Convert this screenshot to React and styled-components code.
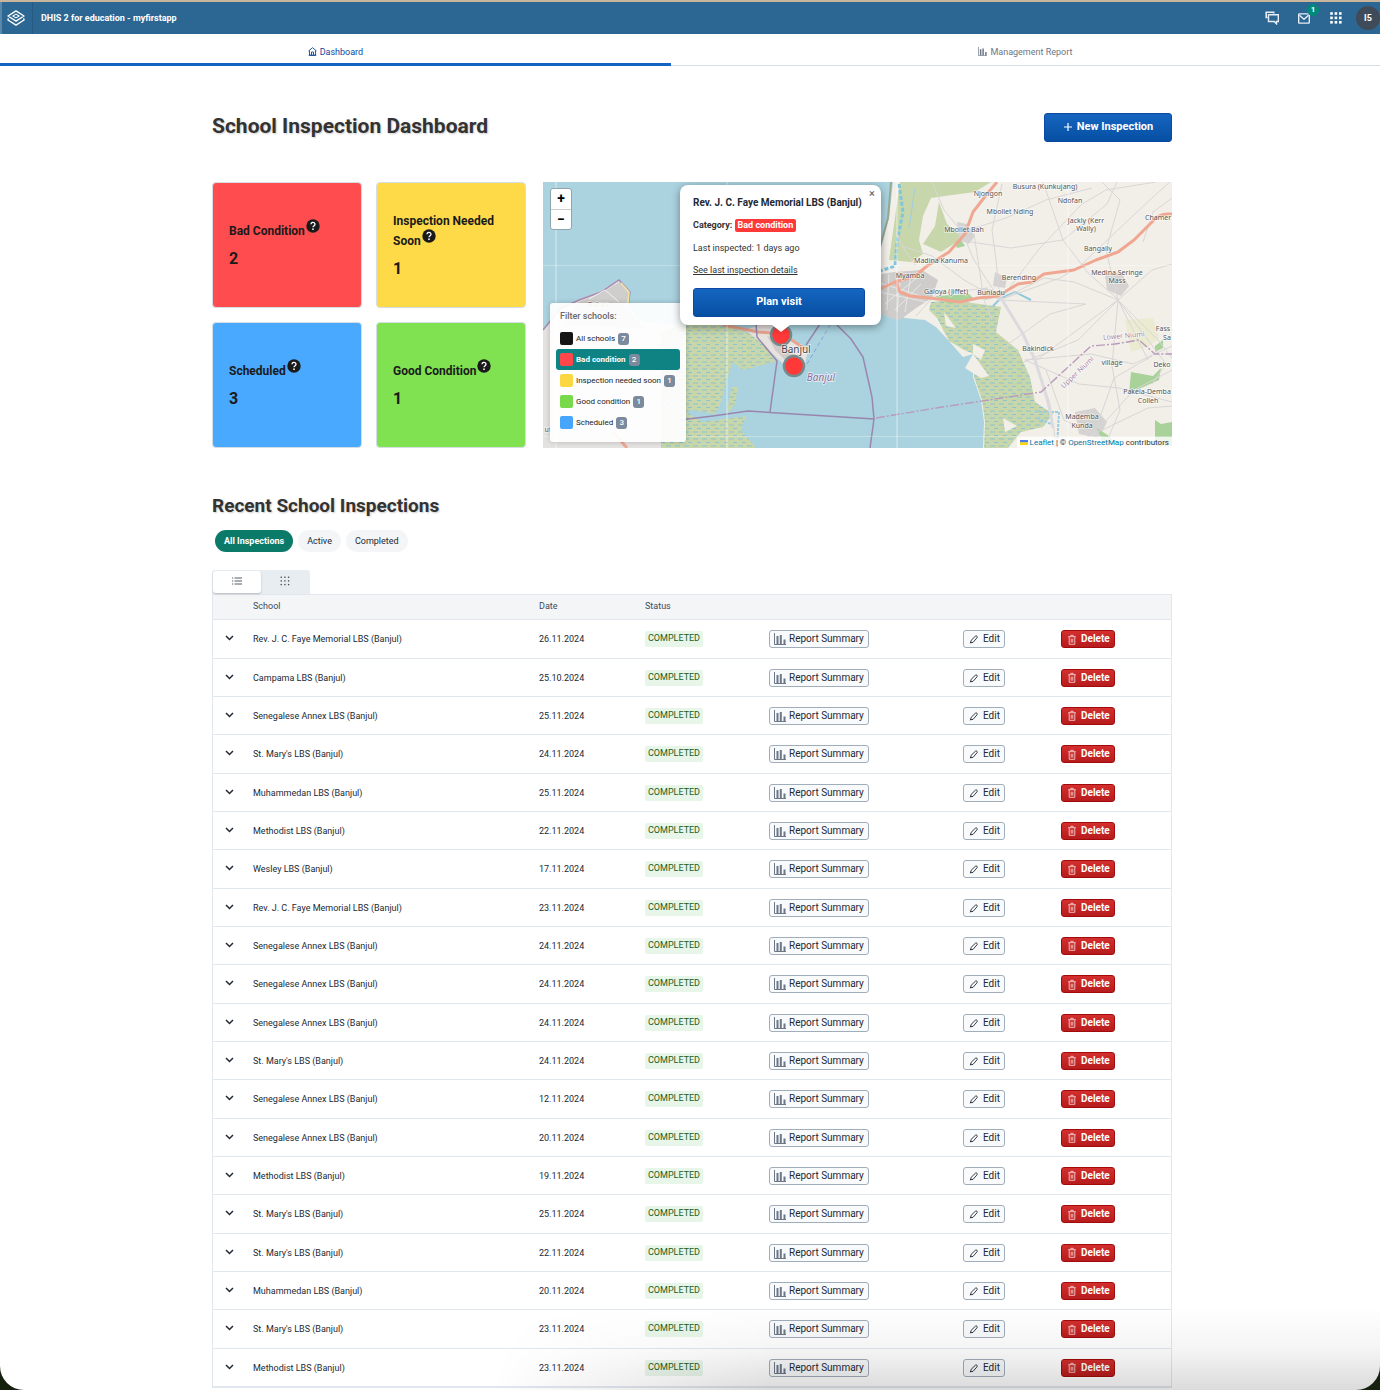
import React, { useState } from "react";
import styled, { createGlobalStyle, css } from "styled-components";

const GlobalStyle = createGlobalStyle`
  *, *::before, *::after { box-sizing: border-box; }
  body {
    margin: 0;
    background: #16210d;
    color: #212934;
    font-family: Roboto, "Liberation Sans", sans-serif;
    font-size: 9px;
    line-height: 12px;
  }
  button { font: inherit; color: inherit; cursor: pointer; margin: 0; }
  h1, h2, h3, p { margin: 0; }
  svg { display: block; flex: none; }
`;

const Window = styled.div`
  position: relative;
  min-height: 100vh;
  overflow: hidden;
  background: #fff;
  border-top: 2px solid #c9b59c;
  border-radius: 0 0 24px 24px;
`;

const WindowShade = styled.div`
  position: absolute;
  right: 0;
  bottom: 0;
  width: 66%;
  height: 84px;
  pointer-events: none;
  background: linear-gradient(to bottom, rgba(0, 0, 0, 0), rgba(0, 0, 0, 0.04) 50%, rgba(0, 0, 0, 0.14));
  mask-image: linear-gradient(100deg, transparent 4%, #000 34%);
`;

/* ---------- header bar ---------- */

const HeaderBar = styled.header`
  display: flex;
  align-items: center;
  height: 32px;
  background: #2c6693;
  border-left: 2px solid #5b87a9;
  color: #fff;
`;

const LogoLink = styled.a`
  display: flex;
  align-items: center;
  width: 31px;
  height: 32px;
  padding-left: 5px;
  border-right: 1px solid #275a82;
`;

const AppTitle = styled.span`
  margin-left: 8px;
  font-weight: 700;
`;

const HeaderTools = styled.nav`
  display: flex;
  align-items: center;
  margin-left: auto;
`;

const ToolButton = styled.button`
  position: relative;
  display: flex;
  align-items: center;
  justify-content: center;
  width: 32px;
  height: 32px;
  padding: 0;
  border: 0;
  background: none;
`;

const UnreadBadge = styled.span`
  position: absolute;
  top: 2px;
  right: 1px;
  width: 12px;
  height: 12px;
  border-radius: 50%;
  background: #00897b;
  font-size: 8px;
  font-weight: 700;
  line-height: 12px;
`;

const Avatar = styled.button`
  width: 24px;
  height: 24px;
  margin-left: 4px;
  padding: 0;
  border: 0;
  border-radius: 50%;
  background: #404b5a;
  font-weight: 700;
`;

/* ---------- tabs ---------- */

const TabBar = styled.nav`
  display: flex;
  height: 32px;
  border-bottom: 1px solid #d5dde5;
`;

const Tab = styled.button`
  display: flex;
  flex: 1 1 auto;
  align-items: center;
  justify-content: center;
  gap: 3px;
  height: 32px;
  padding: 6px 0 0;
  border: 0;
  border-bottom: 3px solid ${(p) => (p.$active ? "#1565c0" : "transparent")};
  background: none;
  color: ${(p) => (p.$active ? "#0d47a1" : "#6c7787")};
`;

/* ---------- page ---------- */

const PageArea = styled.div`
  padding: 47px 0 2px 4px;
`;

const Page = styled.main`
  width: 960px;
  max-width: calc(100% - 32px);
  margin: 0 auto;
`;

const TitleRow = styled.div`
  display: flex;
  align-items: flex-start;
  justify-content: space-between;
`;

const PageTitle = styled.h1`
  color: #333;
  font-size: 21px;
  font-weight: 700;
  line-height: 27px;
  text-shadow: 1px 1px 2px rgba(0, 0, 0, 0.2);
`;

const SectionTitle = styled.h2`
  margin-top: 44px;
  color: #333;
  font-size: 19px;
  font-weight: 700;
  line-height: 28px;
  text-shadow: 1px 1px 2px rgba(0, 0, 0, 0.2);
`;

const PrimaryButton = styled.button`
  display: flex;
  align-items: center;
  justify-content: center;
  gap: 4px;
  width: ${(p) => (p.$wide ? "100%" : "128px")};
  height: 29px;
  padding: 0 0 2px;
  border: 1px solid #0d47a1;
  border-radius: 3px;
  background: linear-gradient(180deg, #1565c0, #0650a3);
  color: #fff;
  font-size: 11px;
  font-weight: 700;
`;

const Overview = styled.section`
  display: grid;
  grid-template-columns: 314px 1fr;
  gap: 17px;
  height: 266px;
  margin-top: 40px;
`;

const CardGrid = styled.div`
  display: grid;
  grid-template-columns: 1fr 1fr;
  grid-auto-rows: 1fr;
  gap: 14px;
`;

const Card = styled.article`
  display: flex;
  flex-direction: column;
  justify-content: center;
  gap: 8px;
  padding: 0 16px;
  border: 1px solid #d5dde5;
  border-radius: 4px;
  background: ${(p) => p.$color};
  color: #1a1a1a;
`;

const CardTitle = styled.h3`
  font-size: 12px;
  font-weight: 700;
  line-height: 20px;

  svg {
    display: inline-block;
    margin: -6px 0 0 1px;
    vertical-align: 0;
  }
`;

const CardCount = styled.p`
  font-size: 16px;
  font-weight: 700;
  line-height: 20px;
`;

/* ---------- map ---------- */

const MapFrame = styled.div`
  position: relative;
  overflow: hidden;
  background: #aad3df;

  > svg { width: 100%; height: 100%; }
`;

const ZoomControl = styled.div`
  position: absolute;
  top: 6px;
  left: 7px;
  display: flex;
  flex-direction: column;
  border: 1px solid #8fa5ad;
  border-radius: 3px;
  background: #fff;
`;

const ZoomButton = styled.button`
  width: 20px;
  height: 20px;
  padding: 0 0 2px;
  border: 0;
  background: none;
  color: #000;
  font-size: 14px;
  font-weight: 700;
  line-height: 18px;

  & + & { border-top: 1px solid #ccc; }
`;

const Popup = styled.div`
  position: absolute;
  top: 3px;
  left: 137px;
  width: 201px;
  height: 140px;
  padding: 11px 16px 0 13px;
  border-radius: 8px;
  background: #fff;
  box-shadow: 0 2px 9px rgba(0, 0, 0, 0.4);
  color: #333;

  &::after {
    content: "";
    position: absolute;
    top: 100%;
    left: 92px;
    border: solid transparent;
    border-width: 7px 9px 0;
    border-top-color: #fff;
  }
`;

const PopupTitle = styled.h3`
  font-size: 10px;
  font-weight: 700;
  line-height: 13px;
  color: #212934;
  white-space: nowrap;
`;

const PopupLine = styled.p`
  margin-top: 9px;
  line-height: 14px;
`;

const PopupLink = styled.a`
  display: block;
  margin: 8px 0 11px;
  color: #333;
  line-height: 14px;
`;

const Category = styled.strong`
  font-weight: 700;
`;

const CategoryTag = styled.span`
  display: inline-block;
  padding: 0 3px;
  border-radius: 2px;
  background: #ff3838;
  color: #fff;
  font-weight: 700;
  line-height: 13px;
`;

const PopupClose = styled.button`
  position: absolute;
  top: 3px;
  right: 3px;
  width: 12px;
  height: 12px;
  padding: 0;
  border: 0;
  background: none;
  color: #555;
  font-size: 11px;
`;

const FilterPanel = styled.div`
  position: absolute;
  left: 7px;
  bottom: 6px;
  display: flex;
  flex-direction: column;
  width: 136px;
  height: 139px;
  padding: 7px 6px 0;
  border-radius: 3px;
  background: rgba(255, 255, 255, 0.92);
  box-shadow: 0 0 5px rgba(0, 0, 0, 0.2);
  color: #1a1a1a;
`;

const FilterTitle = styled.h3`
  margin: 0 4px 6px;
  color: #6a6a6a;
  font-size: 9px;
  font-weight: 500;
`;

const FilterOption = styled.button`
  display: flex;
  align-items: center;
  gap: 3px;
  height: 21px;
  padding: 0 4px;
  border: 0;
  border-radius: 3px;
  background: ${(p) => (p.$active ? "#0f8383" : "none")};
  color: ${(p) => (p.$active ? "#fff" : "inherit")};
  font-size: 8px;
  font-weight: ${(p) => (p.$active ? 700 : 400)};
  white-space: nowrap;
`;

const Swatch = styled.span`
  flex: none;
  width: 13px;
  height: 13px;
  border-radius: 2px;
  background: ${(p) => p.$color};
`;

const CountTag = styled.span`
  flex: none;
  width: 11px;
  height: 12px;
  border-radius: 3px;
  background: #7b8a9c;
  color: #fff;
  font-size: 8px;
  font-weight: 500;
  line-height: 12px;
`;

const Attribution = styled.p`
  position: absolute;
  right: 0;
  bottom: 0;
  display: flex;
  align-items: center;
  gap: 2px;
  padding: 0 3px;
  background: rgba(255, 255, 255, 0.8);
  color: #333;
  font-size: 8px;
  line-height: 11px;

  a { color: #0078a8; text-decoration: none; }
`;

/* ---------- inspections ---------- */

const ChipRow = styled.div`
  display: flex;
  gap: 5px;
  margin: 10px 3px 18px;
`;

const Chip = styled.button`
  height: 22px;
  padding: 0 9px;
  border: 0;
  border-radius: 11px;
  background: ${(p) => (p.$active ? "#0b7a69" : "#f3f5f7")};
  color: ${(p) => (p.$active ? "#fff" : "#212934")};
  font-weight: ${(p) => (p.$active ? 700 : 400)};
`;

const ViewToggle = styled.div`
  display: inline-flex;
  height: 24px;
  padding: 1px;
  border-radius: 3px 3px 0 0;
  background: #e8edf2;
  vertical-align: top;
`;

const ViewButton = styled.button`
  display: flex;
  align-items: center;
  justify-content: center;
  width: 48px;
  height: 22px;
  padding: 0 0 2px;
  border: 0;
  border-radius: 3px;
  ${(p) =>
    p.$active
      ? css`background: #fff; box-shadow: 0 1px 2px rgba(33, 41, 52, 0.25);`
      : css`background: none;`}
`;

const Table = styled.table`
  width: 100%;
  border: 1px solid #e1e7ee;
  border-spacing: 0;
  table-layout: fixed;
`;

const HeadCell = styled.th`
  width: ${(p) => p.$width || "auto"};
  height: 25px;
  padding: 0 0 2px;
  border-bottom: 1px solid #e1e7ee;
  background: #f3f5f7;
  color: #404b5a;
  font-weight: 400;
  text-align: left;
`;

const Row = styled.tr`
  height: 38px;

  &:nth-child(3n + 1) { height: 39px; }
`;

const Cell = styled.td`
  padding: 0;
  border-bottom: 1px solid #e1e7ee;
  vertical-align: middle;
`;

const ExpandButton = styled.button`
  display: flex;
  align-items: center;
  justify-content: center;
  width: 32px;
  height: 20px;
  padding: 0 0 2px;
  border: 0;
  background: none;
`;

const StatusTag = styled.span`
  display: inline-block;
  height: 16px;
  padding: 0 3px;
  border-radius: 2px;
  background: #e8f5e9;
  color: #1b5e20;
  line-height: 15px;
  vertical-align: middle;
`;

const RowButton = styled.button`
  display: flex;
  align-items: center;
  gap: 3px;
  height: 18px;
  padding: 0 4px;
  border: 1px solid #a0adba;
  border-radius: 3px;
  background: #f9fafb;
  font-size: 10px;

  ${(p) =>
    p.$danger &&
    css`
      border-color: #a10b0b;
      background: linear-gradient(180deg, #d32f2f, #b71c1c);
      color: #fff;
      font-weight: 700;
    `}
`;

/* ---------- icons ---------- */

const LogoIcon = () => (
  <svg width="18" height="16" viewBox="0 0 18 16" fill="none" stroke="#fff" strokeWidth="1.4" strokeLinejoin="round">
    <path d="M9 .9 17 6 9 11.1 1 6z" />
    <path d="M9 4.1 12.2 6 9 7.9 5.8 6z" strokeWidth="1.1" />
    <path d="M1.3 8.3 1 10l8 5.1L17 10l-.3-1.7" />
  </svg>
);

const ChatIcon = () => (
  <svg width="14" height="14" viewBox="0 0 14 14" fill="none" stroke="#e6eef5" strokeWidth="1.4">
    <path d="M3.5 3.700h9.800v6.800h-1.800v2.300L9.200 10.500H3.500z" />
    <path d="M.5 1.200h8.200v1.300M1.200.8v5.700h1.500" strokeWidth="1.600" />
  </svg>
);

const MailIcon = () => (
  <svg width="12" height="11" viewBox="0 0 12 11" fill="none" stroke="#e6eef5" strokeWidth="1.4">
    <rect x=".7" y=".9" width="10.6" height="9.2" rx=".6" />
    <path d="m1.5 2.2 4.5 4 4.5-4" />
  </svg>
);

const DotGrid = ({ size, dot, color }) => (
  <svg width={size} height={size} viewBox="0 0 12 12" fill={color}>
    {[0, 1, 2].map((r) =>
      [0, 1, 2].map((c) => (
        <rect key={`${r}${c}`} x={c * 4.4 + (3 - dot) / 2} y={r * 4.4 + (3 - dot) / 2} width={dot} height={dot} />
      ))
    )}
  </svg>
);

const HomeIcon = () => (
  <svg width="9" height="9" viewBox="0 0 9 9" fill="none" stroke="#0d47a1" strokeWidth=".9">
    <path d="M.5 4 4.5.7 8.5 4M1.500 3.500v4.700h6V3.500M.7 8.300h7.600M3.500 8V5h2v3" />
  </svg>
);

const BarsIcon = ({ size }) => (
  <svg width={size} height={size} viewBox="0 0 12 12">
    <path d="M.5 0v11.5H12" fill="none" stroke="#6c7787" />
    <path d="M2.5 3h2v8h-2zM5.800 2h2v9h-2zM9.500 6.500h2V11h-2z" fill="#6c7787" />
  </svg>
);

const PlusIcon = () => (
  <svg width="10" height="10" viewBox="0 0 10 10" stroke="#fff" strokeWidth="1.2">
    <path d="M5 1v8M1 5h8" />
  </svg>
);

const HelpIcon = () => (
  <svg width="14" height="16" viewBox="0 0 14 16" role="img" aria-label="Help">
    <circle cx="7" cy="7" r="6.7" fill="#1a1a1a" />
    <path d="M5 5.300a2 1.800 0 1 1 3 1.500c-.7.4-1 .7-1 1.500" fill="none" stroke="#fff" strokeWidth="1.3" />
    <circle cx="7" cy="10.2" r=".85" fill="#fff" />
  </svg>
);

const ListIcon = () => (
  <svg width="10" height="8" viewBox="0 0 10 8" stroke="#404b5a">
    <path d="M0 1h1.200M0 4h1.200M0 7h1.200M2.500 1H10M2.500 4H10M2.500 7H10" strokeWidth=".9" />
  </svg>
);

const ChevronIcon = () => (
  <svg width="9" height="6" viewBox="0 0 9 6" fill="none" stroke="#212934" strokeWidth="1.5">
    <path d="M1 1l3.500 3.500L8 1" />
  </svg>
);

const PencilIcon = () => (
  <svg width="12" height="10" viewBox="-1 0 12 10" fill="none" stroke="#212934" strokeWidth=".9" strokeLinejoin="round">
    <path d="M6.400 2.200q1-.6 1.600.1t0 1.500L4 8.400l-2.500.4.6-2.400zM1.100 9.200l1.200-1.300" />
  </svg>
);

const TrashIcon = () => (
  <svg width="12" height="11" viewBox="-1 0 12 11" fill="none" stroke="#f6cccc" strokeWidth=".9">
    <path d="M1.200 2.700h7.600M3.800 2.500V1.300h2.400v1.200M2.200 2.900v7.400h5.600V2.900M4.200 4.700v4M5.800 4.700v4" />
  </svg>
);

const FlagIcon = () => (
  <svg width="8" height="5" viewBox="0 0 8 5">
    <path fill="#4c7be1" d="M0 0h8v2.500H0z" />
    <path fill="#ffd500" d="M0 2.500h8V5H0z" />
  </svg>
);

/* ---------- map drawing ---------- */

const minorRoads = [
  "M389 0l12 28 18 22 12 28 26 40 60-22 20-12 40-38 32-30 20-18",
  "M457 118l-4-40-4-30 10-46M457 118l-36-20-32-24-30-10",
  "M457 118l40-52 42-44 24-14 50-8",
  "M419 50l44-14 40-18 46-12M431 52l10 66 8 20",
  "M543 122l-36 10-50 36M543 122l-88-4",
  "M575 118l-44-18-30-4-44 22M575 118l-12-50 14-50-18-18",
  "M575 118l34-30 20-6M575 118l40 40 14 18M575 118l48 64-14 20M575 118l30 60M575 118l-6 66 8 44-16 38",
  "M575 118l-40 40-54 22M575 118l-84 62",
  "M482 178l66-6 42 10 39-18M482 178l54 24 40 4 53 14",
  "M493 180l10 36 8 32 2 18M551 252l-30-14-18-50",
  "M551 252l40-44 38-20M551 252l20-56 38-22M551 252l54-26 24-2M551 252l-30 14M551 252l40 14",
  "M520 58l26 34 30 26M520 58l-20-58M520 58l44-36 10-22M520 58l-52 8-40-6",
  "M373 134l20-22 52-6M373 84l-14-20-6-14M600 60l10-30 19-14",
];

const townStreets = "M334 100l44 14M336 110l48 10M342 122l34-28M352 128l26-26M346 92l-2 36M358 90l-4 40M368 92l-6 38";

const MapDrawing = () => (
  <svg viewBox="0 0 629 266" preserveAspectRatio="xMidYMid slice" role="img" aria-label="Map of Banjul">
    <defs>
      <pattern id="marsh" width="9" height="7" patternUnits="userSpaceOnUse">
        <rect width="9" height="7" fill="#c8d7ab" />
        <path d="M1 1.500h4M0 5h2M6 5h3" stroke="#8cc3cf" strokeWidth="1" />
      </pattern>
    </defs>
    <rect width="629" height="266" fill="#aad3df" />

    <path d="M0 148l18-22 16-8 22-8 20-12 11 12-2 16 14 14 44 4v122H0z" fill="#e3e2e0" />
    <path d="M36 120l24-10 17-10 9 12-4 14 20 20-80-2z" fill="#d0cecc" />
    <path d="M0 148l18-22 18-8 22-8 18-12 11 12-2 16" fill="none" stroke="#a98bb0" strokeWidth="1.5" />
    <path d="M78 101l8 9-1 14" fill="none" stroke="#f3e3a0" strokeWidth="1.5" />
    <path d="M46 117l16-9 14 12" fill="none" stroke="#f4f4f4" />
    <path d="M70 250l14 16" stroke="#f0a792" strokeWidth="3" />
    <path
      d="M143 140l42 4 28 10 17 20 4 5-34 9-10-8-6 16-6 24-6 12-22-4-7 2 17 10 43-6-5 14 15 18H118V150z"
      fill="url(#marsh)"
    />
    <path d="M189 205h6l-3 17-8 10 2-16z" fill="url(#marsh)" />
    <path d="M202 148l23-8 20 14 20 14-3 14-17 4-9-8-21-20z" fill="#e8e2df" />
    <path d="M224 154l14 4 14 14-8 8-12-12z" fill="#cfcbc9" />
    <path d="M180 143l35 7 25 2 22 15" fill="none" stroke="#e8a48e" strokeWidth="3" />
    <path
      d="M213 142l1 13 20 24-7 51M137 238l33-4 35-5 126 8-4 29M331 237l-2-22-9-40-12-18-16-16M263 163l16-24"
      fill="none"
      stroke="#9a86ad"
      strokeWidth="1.5"
    />
    <path d="M264 182l26-44" stroke="#8aa0e0" strokeDasharray="4 3" />

    <path
      d="M350 0l-4 36-11 42-5 10v30l9 4 8 11 7-1 8 4 20 2 11 7 12 13 15 17 10-3v23l8 23 3 22-1 26h189V0z"
      fill="#f2efe9"
    />
    <path d="M348 0l-3 36-14 50" fill="none" stroke="#9aa890" strokeWidth="2" />
    <path d="M357 0h91l-16 10-30 4-14 2-8 18-4 24 4 14-12 8-22-2z" fill="#c8d7ab" />
    <path d="M356 2l4 28-6 30-2 24-18 6" fill="none" stroke="#7fc6dc" strokeWidth="3" strokeDasharray="4 2" />
    <path d="M372 6l-6 40" fill="none" stroke="#9ccde0" />
    <path d="M396 20l8 22 16 14-22 14-18-8 12-18z" fill="#c8d7ab" />
    <path d="M327 94l24-4 28-2 16 10-6 18-16 10-16 12-10-2-8-4-12-14z" fill="#cfcdcb" />
    <path d={townStreets} stroke="#e9e7e6" fill="none" />
    <path
      d="M414 40l10 2 8 12-6 8-10-4zM452 90l12 6-2 10-12-2zM440 106l10 2 2 8-10 2zM562 92l16-2 8 14-8 10-14-6zM532 230l20-4 12 14-8 16-20-4z"
      fill="#d5d3d1"
    />
    <path
      d="M388 120l20-2 50 7-5 25 22 18 12 27 5 25 18 12-10 13-22 5-13 16h-24l1-26-3-22-8-23v-23l-10-4-15-9-12-23-8-8z"
      fill="url(#marsh)"
    />
    <path d="M401 130l12 16-10-2zM430 162l12 6-4 10-8-6zM430 172l16 22-8 2-16-10zM460 236l14 8-12 6z" fill="#f2efe9" />
    <path
      d="M392 114l34-2 6 6-26 4zM412 60l6-2 4 6-8 2zM588 190l22 4 8-8-2 12-18 8-12 6zM612 164l8-6v8l-8 4zM612 238l6 4 11-2v24h-17zM554 246l12 8 6 8h-12z"
      fill="#a9d19a"
    />
    <path d="M582 138l28-2 6 20-10 8-18 6z" fill="#eaebd0" />
    <path d="M450 124l8-8 14-6 16 8" fill="none" stroke="#8fc9de" strokeWidth="2" />
    <path d="M492 230h24l-2 36M494 236l14 6" fill="none" stroke="#9ccde0" strokeWidth="2" strokeDasharray="3 1" />
    <g fill="none" stroke="#d8d6d6" strokeWidth="1">
      {minorRoads.map((d) => (
        <path key={d} d={d} />
      ))}
    </g>
    <path d="M458 116l22 36 12 26 14 44 4 24" fill="none" stroke="#dcdadf" strokeWidth="3" />
    <g fill="none" stroke="#f0a792" strokeWidth="3" strokeLinejoin="round">
      <path d="M454 0l-10 12-14 18-8 22-16 18-22 14-12 10-20 6-30 14" />
      <path d="M353 100l4 10 10 4 20 2 30 4 18-4 20-2 20-12 14-2 12-8 30-4 22-10 22-8 16-12 18-18q6-8 16-8h24" />
    </g>
    <path
      d="M333 236l60-10 105-16 50-46 24-2 24-4 16 14h17"
      fill="none"
      stroke="#b89abb"
      strokeWidth="1.4"
      strokeDasharray="9 2 2 2"
    />
    <g stroke="#fff" strokeOpacity=".55">
      <path d="M13 0v266M184 0v266M354 0v266M525 0v266" />
      <path d="M0 83.500h629M0 254.500h629" strokeOpacity=".3" />
    </g>
    <g
      fill="#555"
      stroke="#fff"
      strokeWidth="1.5"
      strokeOpacity=".6"
      paintOrder="stroke"
      fontFamily='"Noto Sans", sans-serif'
      fontSize="7"
      textAnchor="middle"
    >
      <text x="502" y="7">Busura (Kunkujang)</text>
      <text x="445" y="14">Njongon</text>
      <text x="527" y="21">Ndofan</text>
      <text x="467" y="32">Mbollet Nding</text>
      <text x="543" y="41">Jackly (Kerr</text>
      <text x="543" y="49">Wally)</text>
      <text x="615" y="38">Chamer</text>
      <text x="421" y="50">Mbollet Bah</text>
      <text x="555" y="69">Bangally</text>
      <text x="398" y="81">Madina Kanuma</text>
      <text x="367" y="96">Myamba</text>
      <text x="476" y="98">Berending</text>
      <text x="574" y="93">Medina Seringe</text>
      <text x="574" y="101">Mass</text>
      <text x="403" y="112">Galoya (Jiffet)</text>
      <text x="448" y="113">Buniadu</text>
      <text x="495" y="169">Bakindick</text>
      <text x="569" y="183">village</text>
      <text x="620" y="149">Fass</text>
      <text x="624" y="158">Sa</text>
      <text x="619" y="185">Deko</text>
      <text x="604" y="212">Pakela-Demba</text>
      <text x="605" y="221">Colleh</text>
      <text x="539" y="237">Mademba</text>
      <text x="539" y="246">Kunda</text>
      <text x="55" y="125">Bakau</text>
      <text x="5" y="250">ut</text>
      <text x="581" y="156" fill="#a888ae" transform="rotate(-5 581 156)">Lower Niumi</text>
      <text x="536" y="192" fill="#a888ae" transform="rotate(-44 536 192)">Upper Niumi</text>
    </g>
    <g fill="#ff3838" stroke="#748b8e" strokeWidth="2.5">
      <circle cx="238" cy="153" r="10" />
      <circle cx="251" cy="184" r="10" />
    </g>
    <g
      stroke="#fff"
      strokeWidth="1.5"
      strokeOpacity=".7"
      paintOrder="stroke"
      fontFamily='"Noto Sans", sans-serif'
      fontSize="10"
      textAnchor="middle"
    >
      <text x="253" y="171" fill="#444">Banjul</text>
      <text x="278" y="199" fontStyle="italic" fill="#8d6b9b">Banjul</text>
    </g>
  </svg>
);

/* ---------- data ---------- */

const cards = [
  { title: "Bad Condition", count: 2, color: "#ff4c4f" },
  { title: "Inspection Needed Soon", count: 1, color: "#ffda48" },
  { title: "Scheduled", count: 3, color: "#48a9ff" },
  { title: "Good Condition", count: 1, color: "#80e251" },
];

const filters = [
  { label: "All schools", count: 7, color: "#151515" },
  { label: "Bad condition", count: 2, color: "#ff474b" },
  { label: "Inspection needed soon", count: 1, color: "#fad743" },
  { label: "Good condition", count: 1, color: "#78d94a" },
  { label: "Scheduled", count: 3, color: "#46a6fb" },
];

const inspections = [
  ["Rev. J. C. Faye Memorial LBS (Banjul)", "26.11.2024"],
  ["Campama LBS (Banjul)", "25.10.2024"],
  ["Senegalese Annex LBS (Banjul)", "25.11.2024"],
  ["St. Mary's LBS (Banjul)", "24.11.2024"],
  ["Muhammedan LBS (Banjul)", "25.11.2024"],
  ["Methodist LBS (Banjul)", "22.11.2024"],
  ["Wesley LBS (Banjul)", "17.11.2024"],
  ["Rev. J. C. Faye Memorial LBS (Banjul)", "23.11.2024"],
  ["Senegalese Annex LBS (Banjul)", "24.11.2024"],
  ["Senegalese Annex LBS (Banjul)", "24.11.2024"],
  ["Senegalese Annex LBS (Banjul)", "24.11.2024"],
  ["St. Mary's LBS (Banjul)", "24.11.2024"],
  ["Senegalese Annex LBS (Banjul)", "12.11.2024"],
  ["Senegalese Annex LBS (Banjul)", "20.11.2024"],
  ["Methodist LBS (Banjul)", "19.11.2024"],
  ["St. Mary's LBS (Banjul)", "25.11.2024"],
  ["St. Mary's LBS (Banjul)", "22.11.2024"],
  ["Muhammedan LBS (Banjul)", "20.11.2024"],
  ["St. Mary's LBS (Banjul)", "23.11.2024"],
  ["Methodist LBS (Banjul)", "23.11.2024"],
];

/* ---------- app ---------- */

export default function App() {
  const [tab, setTab] = useState("dashboard");
  const [filter, setFilter] = useState("Bad condition");
  const [chip, setChip] = useState("All Inspections");
  const [view, setView] = useState("list");

  return (
    <>
      <GlobalStyle />
      <Window>
        <HeaderBar>
          <LogoLink href="#home" aria-label="Home">
            <LogoIcon />
          </LogoLink>
          <AppTitle>DHIS 2 for education - myfirstapp</AppTitle>
          <HeaderTools>
            <ToolButton aria-label="Interpretations">
              <ChatIcon />
            </ToolButton>
            <ToolButton aria-label="Messages">
              <MailIcon />
              <UnreadBadge>1</UnreadBadge>
            </ToolButton>
            <ToolButton aria-label="Apps">
              <DotGrid size={12} dot={2.6} color="#fff" />
            </ToolButton>
            <Avatar>I5</Avatar>
          </HeaderTools>
        </HeaderBar>

        <TabBar>
          <Tab $active={tab === "dashboard"} onClick={() => setTab("dashboard")}>
            <HomeIcon />
            Dashboard
          </Tab>
          <Tab $active={tab === "report"} onClick={() => setTab("report")}>
            <BarsIcon size={9} />
            Management Report
          </Tab>
        </TabBar>

        <PageArea>
          <Page>
            <TitleRow>
              <PageTitle>School Inspection Dashboard</PageTitle>
              <PrimaryButton>
                <PlusIcon />
                New Inspection
              </PrimaryButton>
            </TitleRow>

            <Overview>
              <CardGrid>
                {cards.map((c) => (
                  <Card key={c.title} $color={c.color}>
                    <CardTitle>
                      {c.title}
                      <HelpIcon />
                    </CardTitle>
                    <CardCount>{c.count}</CardCount>
                  </Card>
                ))}
              </CardGrid>

              <MapFrame>
                <MapDrawing />
                <ZoomControl>
                  <ZoomButton aria-label="Zoom in">+</ZoomButton>
                  <ZoomButton aria-label="Zoom out">−</ZoomButton>
                </ZoomControl>
                <FilterPanel>
                  <FilterTitle>Filter schools:</FilterTitle>
                  {filters.map((f) => (
                    <FilterOption key={f.label} $active={filter === f.label} onClick={() => setFilter(f.label)}>
                      <Swatch $color={f.color} />
                      {f.label}
                      <CountTag>{f.count}</CountTag>
                    </FilterOption>
                  ))}
                </FilterPanel>
                <Popup>
                  <PopupClose aria-label="Close">×</PopupClose>
                  <PopupTitle>Rev. J. C. Faye Memorial LBS (Banjul)</PopupTitle>
                  <PopupLine>
                    <Category>Category:</Category> <CategoryTag>Bad condition</CategoryTag>
                  </PopupLine>
                  <PopupLine>Last inspected: 1 days ago</PopupLine>
                  <PopupLink href="#details">See last inspection details</PopupLink>
                  <PrimaryButton $wide>Plan visit</PrimaryButton>
                </Popup>
                <Attribution>
                  <FlagIcon />
                  <span>
                    <a href="#leaflet">Leaflet</a> | © <a href="#osm">OpenStreetMap</a> contributors
                  </span>
                </Attribution>
              </MapFrame>
            </Overview>

            <SectionTitle>Recent School Inspections</SectionTitle>
            <ChipRow>
              {["All Inspections", "Active", "Completed"].map((label) => (
                <Chip key={label} $active={chip === label} onClick={() => setChip(label)}>
                  {label}
                </Chip>
              ))}
            </ChipRow>

            <ViewToggle>
              <ViewButton aria-label="List view" $active={view === "list"} onClick={() => setView("list")}>
                <ListIcon />
              </ViewButton>
              <ViewButton aria-label="Grid view" $active={view === "grid"} onClick={() => setView("grid")}>
                <DotGrid size={10} dot={1.6} color="#404b5a" />
              </ViewButton>
            </ViewToggle>

            <Table>
              <thead>
                <tr>
                  <HeadCell $width="40px" aria-label="Expand" />
                  <HeadCell>School</HeadCell>
                  <HeadCell $width="106px">Date</HeadCell>
                  <HeadCell $width="124px">Status</HeadCell>
                  <HeadCell $width="194px" aria-label="Report" />
                  <HeadCell $width="98px" aria-label="Edit" />
                  <HeadCell $width="110px" aria-label="Delete" />
                </tr>
              </thead>
              <tbody>
                {inspections.map(([school, date], i) => (
                  <Row key={i}>
                    <Cell>
                      <ExpandButton aria-label="Expand row">
                        <ChevronIcon />
                      </ExpandButton>
                    </Cell>
                    <Cell>{school}</Cell>
                    <Cell>{date}</Cell>
                    <Cell>
                      <StatusTag>COMPLETED</StatusTag>
                    </Cell>
                    <Cell>
                      <RowButton>
                        <BarsIcon size={12} />
                        Report Summary
                      </RowButton>
                    </Cell>
                    <Cell>
                      <RowButton>
                        <PencilIcon />
                        Edit
                      </RowButton>
                    </Cell>
                    <Cell>
                      <RowButton $danger>
                        <TrashIcon />
                        Delete
                      </RowButton>
                    </Cell>
                  </Row>
                ))}
              </tbody>
            </Table>
          </Page>
        </PageArea>
        <WindowShade />
      </Window>
    </>
  );
}
